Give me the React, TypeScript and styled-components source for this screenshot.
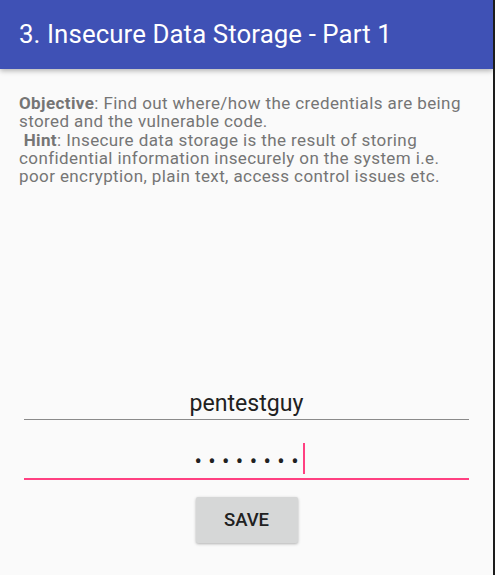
import React from 'react';
import styled, { createGlobalStyle } from 'styled-components';

const GlobalStyle = createGlobalStyle`
  html, body {
    margin: 0;
    padding: 0;
    background: #fafafa;
  }
  body {
    font-family: Roboto, "Noto Sans", sans-serif;
  }
`;

const Screen = styled.div`
  width: 493px;
  height: 575px;
  background: #fafafa;
  border-right: 2px solid #1c1c1c;
  display: flex;
  flex-direction: column;
  overflow: hidden;
`;

const AppBar = styled.header`
  height: 69px;
  background: #3f51b5;
  display: flex;
  align-items: center;
  padding: 0 19px;
  box-shadow: 0 2px 5px rgba(0, 0, 0, 0.28);
  position: relative;
  z-index: 1;
`;

const Title = styled.h1`
  margin: 0;
  color: #ffffff;
  font-size: 25.8px;
  font-weight: 400;
  letter-spacing: 0.1px;
  padding-bottom: 2px;
`;

const Body = styled.main`
  flex: 1;
  display: flex;
  flex-direction: column;
  padding: 25px 19px 0;
`;

const Description = styled.p`
  margin: 0;
  color: #757575;
  font-size: 17px;
  letter-spacing: 0.4px;
  line-height: 18.3px;
`;

const Form = styled.form`
  margin-top: 193px;
  display: flex;
  flex-direction: column;
  align-items: center;
  padding: 0 5px;
`;

const Field = styled.div<{ $focused?: boolean }>`
  width: 100%;
  height: 42px;
  display: flex;
  align-items: ${(p) => (p.$focused ? 'center' : 'flex-end')};
  justify-content: center;
  box-sizing: border-box;
  padding-bottom: ${(p) => (p.$focused ? '0' : '2px')};
  border-bottom: ${(p) => (p.$focused ? '2px solid #ff4081' : '1px solid #8a8a8a')};
  color: #212121;
  font-size: 23.1px;
  margin-bottom: ${(p) => (p.$focused ? '17px' : '18px')};
`;

const Dots = styled.span`
  font-size: 22px;
  letter-spacing: 6.4px;
  margin-right: -6.4px;
  position: relative;
  top: 3px;

  &::after {
    content: '';
    position: absolute;
    left: calc(100% - 2px);
    top: -6px;
    width: 2px;
    height: 31px;
    background: #ff4081;
  }
`;

const SaveButton = styled.button`
  width: 102px;
  height: 46px;
  border: none;
  border-radius: 2px;
  background: #d6d7d7;
  color: #212121;
  font-family: Roboto, sans-serif;
  font-size: 18.5px;
  font-weight: 500;
  box-shadow: 0 1px 3px rgba(0, 0, 0, 0.3);
`;

export default function App() {
  return (
    <>
      <GlobalStyle />
      <Screen>
        <AppBar>
          <Title>3. Insecure Data Storage - Part 1</Title>
        </AppBar>
        <Body>
          <Description>
            <b>Objective</b>: Find out where/how the credentials are being stored and the vulnerable code.
            <br />
            &nbsp;<b>Hint</b>: Insecure data storage is the result of storing confidential information
            insecurely on the system i.e. poor encryption, plain text, access control issues etc.
          </Description>
          <Form onSubmit={(e) => e.preventDefault()}>
            <Field>pentestguy</Field>
            <Field $focused>
              <Dots>••••••••</Dots>
            </Field>
            <SaveButton type="submit">SAVE</SaveButton>
          </Form>
        </Body>
      </Screen>
    </>
  );
}
